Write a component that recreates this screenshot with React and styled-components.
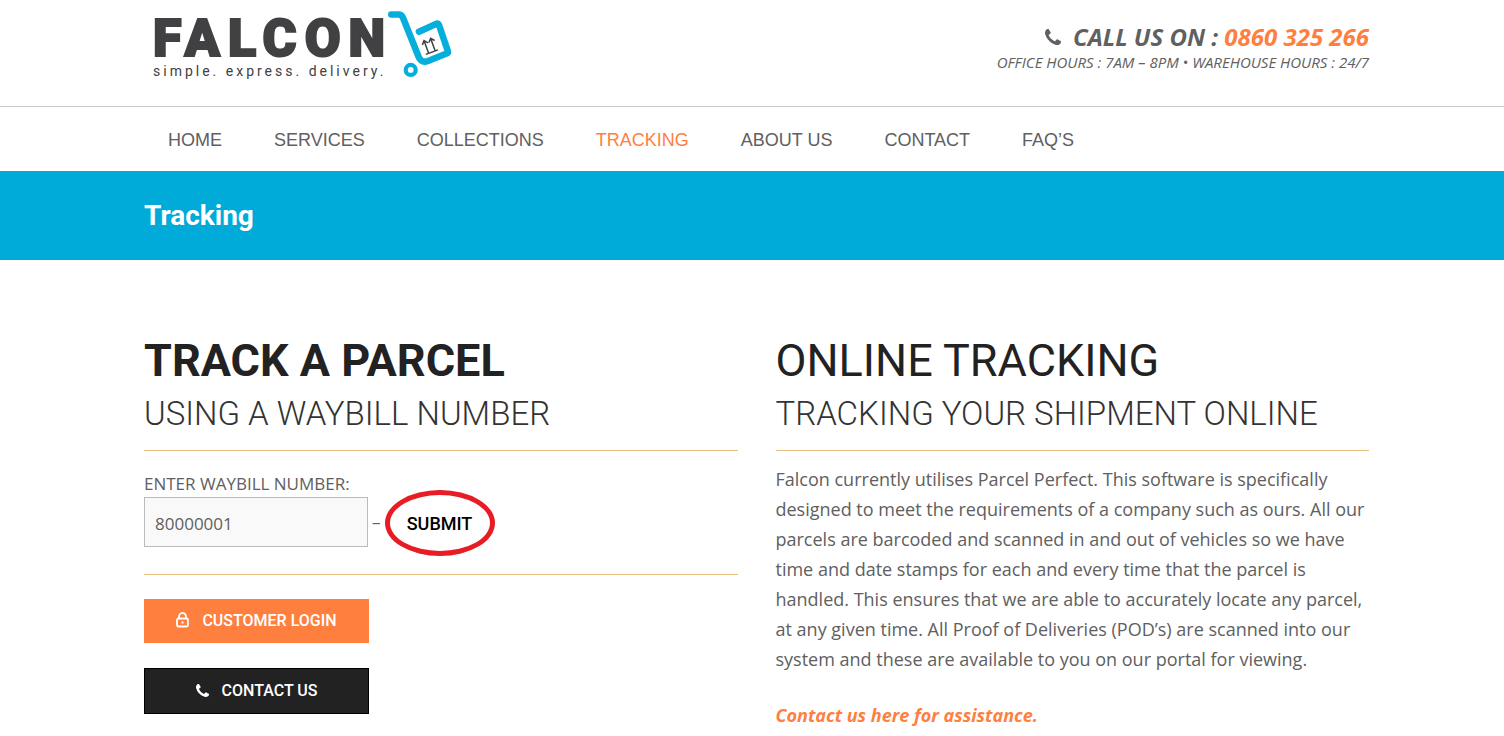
import React, { useState } from "react";
import styled, { createGlobalStyle } from "styled-components";

const navItems = [
  { label: "HOME", href: "#home" },
  { label: "SERVICES", href: "#services" },
  { label: "COLLECTIONS", href: "#collections" },
  { label: "TRACKING", href: "#tracking", active: true },
  { label: "ABOUT US", href: "#about" },
  { label: "CONTACT", href: "#contact" },
  { label: "FAQ’S", href: "#faqs" }
];

const TrolleyIcon = () => (
  <TrolleySvg width="68" height="70" viewBox="0 0 68 70" fill="none" aria-hidden="true">
    <path
      d="M6.300 5.500H13.500C16 5.500 17 6.300 18 8.700L32.300 44.500C34.500 51.500 37.500 54 43 52L61.500 44.500C62.800 44 63.200 43.200 62.800 42L54 16C53.500 14.500 52.800 14.300 51.500 14.800L34 22.700"
      stroke="#05aedb"
      strokeWidth="6.600"
      strokeLinecap="round"
      strokeLinejoin="round"
    />
    <circle cx="25.700" cy="60.900" r="5" stroke="#05aedb" strokeWidth="4.200" />
    <g stroke="#414042" strokeWidth="1.500" transform="translate(44.700 37) rotate(-20)">
      <path d="M-3.500 6.500V-6M-6.500 -3.500L-3.500 -7L-0.500 -3.500M3.500 6.500V-6M0.500 -3.500L3.500 -7L6.500 -3.500M-6.500 6.500H6.500" />
    </g>
  </TrolleySvg>
);

const PhoneIcon = ({ size }) => (
  <svg width={size} height={size} viewBox="0 0 1408 1408" fill="currentColor" aria-hidden="true">
    <path
      transform="matrix(1 0 0 -1 0 1408)"
      d="M1408 296q0-27-10-70.500t-21-68.500q-21-50-122-106-94-51-186-51-27 0-52.500 3.500t-57.500 12.500-47.500 14.500-55.500 20.500-49 18q-98 35-175 83-128 79-264.500 215.500t-215.500 264.500q-48 77-83 175-3 9-18 49t-20.500 55.500-14.500 47.500-12.500 57.500-3.500 52.500q0 92 51 186 56 101 106 122 25 11 68.500 21t70.500 10q14 0 21-3 18-6 53-76 11-19 30-54t35-63.500 31-53.500q3-4 17.500-25t21.500-35.500 7-28.500q0-20-28.500-50t-62-55-62-53-28.500-46q0-9 5-22.500t8.500-20.500 14-24 11.500-19q76-137 174-235t235-174q2-1 19-11.500t24-14 20.500-8.500 22.500-5q18 0 46 28.500t53 62 55 62 50 28.500q14 0 28.500-7t35.500-21.500 25-17.500q25-15 53.500-31t63.500-35 54-30q70-35 76-53 3-7 3-21z"
    />
  </svg>
);

const LockIcon = () => (
  <svg width="13" height="16" viewBox="0 0 13 16" fill="none" stroke="currentColor" aria-hidden="true">
    <rect x="1" y="6.500" width="11" height="8" rx="1.500" strokeWidth="1.800" />
    <path d="M3 6.500V4.500a3.500 3.500 0 0 1 7 0V6.500" strokeWidth="1.800" />
    <path d="M5.500 10.500h2" strokeWidth="2" />
  </svg>
);

const App = () => {
  const [waybill, setWaybill] = useState("80000001");

  return (
    <>
      <GlobalStyle />
      <Header>
        <Logo href="#home">
          <LogoText>
            <LogoName>FALCON</LogoName>
            <LogoTagline>simple. express. delivery.</LogoTagline>
          </LogoText>
          <TrolleyIcon />
        </Logo>
        <CallInfo>
          <CallLine>
            <PhoneIcon size={16} />
            <span>
              CALL US ON : <Phone href="tel:0860325266">0860 325 266</Phone>
            </span>
          </CallLine>
          <Hours>OFFICE HOURS : 7AM – 8PM • WAREHOUSE HOURS : 24/7</Hours>
        </CallInfo>
      </Header>

      <Nav>
        {navItems.map((item) => (
          <NavLink key={item.label} href={item.href} $active={item.active}>
            {item.label}
          </NavLink>
        ))}
      </Nav>

      <Banner>
        <BannerTitle>Tracking</BannerTitle>
      </Banner>

      <Main>
        <section>
          <Title $bold>TRACK A PARCEL</Title>
          <Subtitle>USING A WAYBILL NUMBER</Subtitle>
          <Rule />
          <WaybillForm onSubmit={(e) => e.preventDefault()}>
            <label htmlFor="waybill">ENTER WAYBILL NUMBER:</label>
            <FormRow>
              <WaybillInput
                id="waybill"
                type="text"
                value={waybill}
                onChange={(e) => setWaybill(e.target.value)}
              />
              <span>–</span>
              <SubmitButton type="submit">SUBMIT</SubmitButton>
            </FormRow>
          </WaybillForm>
          <Rule />
          <Actions>
            <ActionLink href="#login">
              <LockIcon />
              CUSTOMER LOGIN
            </ActionLink>
            <ActionLink href="#contact" $dark>
              <PhoneIcon size={13} />
              CONTACT US
            </ActionLink>
          </Actions>
        </section>

        <section>
          <Title>ONLINE TRACKING</Title>
          <Subtitle>TRACKING YOUR SHIPMENT ONLINE</Subtitle>
          <Rule />
          <Description>
            Falcon currently utilises Parcel Perfect. This software is specifically designed to meet
            the requirements of a company such as ours. All our parcels are barcoded and scanned in
            and out of vehicles so we have time and date stamps for each and every time that the
            parcel is handled. This ensures that we are able to accurately locate any parcel, at any
            given time. All Proof of Deliveries (POD’s) are scanned into our system and these are
            available to you on our portal for viewing.
          </Description>
          <AssistLink href="#contact">Contact us here for assistance.</AssistLink>
        </section>
      </Main>
    </>
  );
};

export default App;

const GlobalStyle = createGlobalStyle`
  * {
    box-sizing: border-box;
  }
  body {
    margin: 0;
    background: #fff;
    color: #606060;
    font-family: "Segoe UI", "Open Sans", sans-serif;
    font-size: 17px;
  }
  h1, h2, h3, p {
    margin: 0;
  }
  a {
    text-decoration: none;
  }
`;

const Header = styled.header`
  display: flex;
  justify-content: space-between;
  align-items: flex-start;
  min-height: 107px;
  padding: 9px 135px 0 153px;
  border-bottom: 1px solid #ccc;
`;

const Logo = styled.a`
  display: flex;
  color: #414042;
  font-family: Roboto, sans-serif;
`;

const LogoText = styled.span`
  display: flex;
  flex-direction: column;
  padding-top: 5px;
`;

const LogoName = styled.span`
  font-size: 52px;
  font-weight: 900;
  line-height: 50px;
  letter-spacing: 8px;
  -webkit-text-stroke: 2px #414042;
`;

const LogoTagline = styled.span`
  font-size: 14px;
  line-height: 14px;
  letter-spacing: 3px;
`;

const TrolleySvg = styled.svg`
  flex: none;
  margin-left: -8px;
`;

const CallInfo = styled.div`
  padding-top: 12px;
  font-style: italic;
  text-align: right;
`;

const CallLine = styled.div`
  display: flex;
  justify-content: flex-end;
  align-items: center;
  gap: 12px;
  font-size: 24px;
  font-weight: 700;
  line-height: 32px;
`;

const Phone = styled.a`
  color: #ff7f3f;
`;

const Hours = styled.p`
  font-size: 15px;
  line-height: 19px;
`;

const Nav = styled.nav`
  display: flex;
  gap: 52px;
  padding: 2px 168px 0;
  font-family: Arial, "Liberation Sans", sans-serif;
  font-size: 18px;
  line-height: 62px;
`;

const NavLink = styled.a`
  color: ${(props) => (props.$active ? "#ff7f3f" : "#606060")};
`;

const Banner = styled.div`
  padding: 24px 144px;
  background: #00abda;
`;

const BannerTitle = styled.h1`
  color: #fff;
  font-family: Roboto, sans-serif;
  font-size: 28px;
  font-weight: 700;
  line-height: 41px;
`;

const Main = styled.main`
  display: grid;
  grid-template-columns: 1fr 1fr;
  gap: 38px;
  padding: 73px 135px 0 144px;
`;

const Title = styled.h2`
  color: #222;
  font-family: Roboto, sans-serif;
  font-size: 45px;
  font-weight: ${(props) => (props.$bold ? 700 : 400)};
  line-height: 56px;
`;

const Subtitle = styled.h3`
  color: #333;
  font-family: Roboto, sans-serif;
  font-size: 33px;
  font-weight: 300;
  line-height: 49px;
`;

const Rule = styled.hr`
  height: 1px;
  margin: 12px 0;
  border: 0;
  background: #e9bf85;
`;

const WaybillForm = styled.form`
  padding: 8px 0 15px;
  line-height: 26px;
`;

const FormRow = styled.div`
  display: flex;
  align-items: center;
  gap: 4px;
`;

const WaybillInput = styled.input`
  width: 224px;
  height: 50px;
  padding: 2px 10px 0;
  border: 1px solid #bbb;
  background: #f9f9f9;
  color: #606060;
  font: inherit;
`;

const SubmitButton = styled.button`
  width: 110px;
  height: 66px;
  margin: -7px 0 -9px;
  padding: 0;
  border: 5px solid #e81c24;
  border-radius: 50%;
  background: transparent;
  color: #000;
  font-family: Roboto, sans-serif;
  font-size: 18px;
  font-weight: 500;
`;

const Actions = styled.div`
  display: flex;
  flex-direction: column;
  align-items: flex-start;
  gap: 25px;
  padding-top: 12px;
`;

const ActionLink = styled.a`
  display: flex;
  justify-content: center;
  align-items: center;
  gap: 13px;
  width: 225px;
  height: ${(props) => (props.$dark ? "46px" : "44px")};
  padding-bottom: 2px;
  border: ${(props) => (props.$dark ? "1px solid #000" : "0")};
  background: ${(props) => (props.$dark ? "#222" : "#ff7f3f")};
  color: #fff;
  font-family: Roboto, sans-serif;
  font-size: 16px;
  font-weight: 500;
`;

const Description = styled.p`
  margin-bottom: 29px;
  padding-top: 1px;
  font-size: 18px;
  line-height: 30px;
`;

const AssistLink = styled.a`
  color: #ff7f3f;
  font-size: 18px;
  font-style: italic;
  font-weight: 700;
`;
